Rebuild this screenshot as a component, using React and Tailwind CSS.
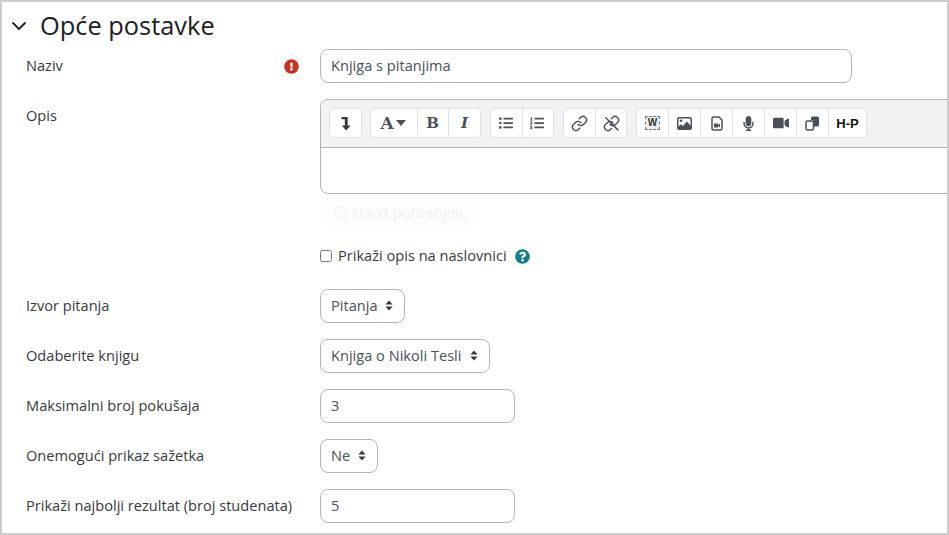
import React from "react";
import {
  FaExclamationCircle,
  FaListOl,
  FaListUl,
  FaMicrophone,
  FaQuestionCircle,
  FaVideo,
} from "react-icons/fa";
import { ChevronDown, Info, Link } from "lucide-react";

function ToolButton({ children, className = "w-[31px]" }) {
  return (
    <div
      className={`flex h-full items-center justify-center border-l border-[#dee2e6] first:border-l-0 text-[#495057] ${className}`}
    >
      {children}
    </div>
  );
}

function ToolGroup({ children, className = "" }) {
  return (
    <div className={`flex h-[30px] rounded-[4px] border border-[#dee2e6] bg-white ${className}`}>
      {children}
    </div>
  );
}

function Row({ label, alert, children }) {
  return (
    <div className="flex">
      <div className="flex h-[34px] w-[294px] shrink-0 items-center justify-between pr-[21px]">
        <span>{label}</span>
        {alert && <FaExclamationCircle className="text-[15px] text-[#ca3120]" />}
      </div>
      {children}
    </div>
  );
}

function TextField({ value, width }) {
  return (
    <input
      readOnly
      value={value}
      className={`h-[34px] rounded-[8px] border border-[#b1b5bb] bg-white px-[10px] pb-[3px] text-[#495057] outline-none ${width}`}
    />
  );
}

function SelectField({ value, width }) {
  return (
    <div
      className={`flex h-[34px] items-center justify-between rounded-[8px] border border-[#b1b5bb] bg-white px-[10px] pb-[1px] pr-[11px] text-[#495057] ${width}`}
    >
      <span>{value}</span>
      <svg width="8" height="11" viewBox="0 0 8 11" fill="#343a40">
        <path d="M4 0.5 7.6 4.4H0.4Z" />
        <path d="M4 10.5 0.4 6.6H7.6Z" />
      </svg>
    </div>
  );
}

function App() {
  return (
    <div className="h-[535px] w-[949px] overflow-hidden border-2 border-[#cccccc] bg-white font-['Open_Sans',sans-serif] text-[14.6px] text-[#373a3c]">
      <div className="flex h-[47px] items-center pl-[5px]">
        <ChevronDown size={24} strokeWidth={1.8} className="text-[#1d2125]" />
        <h3 className="ml-[9px] text-[25.4px] text-[#1d2125]">Opće postavke</h3>
      </div>

      <div className="flex flex-col pl-[24px]">
        <Row label="Naziv" alert>
          <TextField value="Knjiga s pitanjima" width="w-[532px]" />
        </Row>

        <div className="mt-[16px]">
          <Row label="Opis">
            <div className="flex-1">
              <div className="h-[95px] w-[640px] rounded-[8px] border border-[#b1b5bb]">
                <div className="flex h-[48px] gap-[9px] rounded-t-[8px] border-b border-[#b1b5bb] bg-[#f2f2f2] pl-[8px] pt-[8px]">
                  <ToolGroup className="-mr-px">
                    <ToolButton>
                      <svg width="10" height="15" viewBox="0 0 10 15" fill="#343a40">
                        <path d="M0.5 1h6.2v8.5H9.6L5.2 14.5 0.8 9.5h3V3.2H0.5Z" />
                      </svg>
                    </ToolButton>
                  </ToolGroup>
                  <ToolGroup>
                    <ToolButton className="w-[46px] gap-[2px] pr-[2px]">
                      <span className="font-['DejaVu_Serif',serif] text-[17px] font-bold leading-none">A</span>
                      <svg width="10" height="6" viewBox="0 0 10 6" fill="#495057">
                        <path d="M0 0h10L5 6Z" />
                      </svg>
                    </ToolButton>
                    <ToolButton className="w-[31px] pr-[1px]">
                      <span className="font-['DejaVu_Serif',serif] text-[15px] font-bold leading-none">B</span>
                    </ToolButton>
                    <ToolButton className="w-[32px]">
                      <span className="font-['DejaVu_Serif',serif] text-[15px] font-bold italic leading-none">I</span>
                    </ToolButton>
                  </ToolGroup>
                  <ToolGroup>
                    <ToolButton className="w-[31px] pr-[2px]">
                      <FaListUl className="text-[14px]" />
                    </ToolButton>
                    <ToolButton className="w-[31px] pr-[2px]">
                      <FaListOl className="text-[14px]" />
                    </ToolButton>
                  </ToolGroup>
                  <ToolGroup>
                    <ToolButton>
                      <Link size={17} strokeWidth={2} />
                    </ToolButton>
                    <ToolButton>
                      <svg width="17" height="17" viewBox="0 0 24 24" fill="none" stroke="currentColor" strokeWidth="2" strokeLinecap="round" strokeLinejoin="round">
                        <path d="M10 13a5 5 0 0 0 7.54.54l3-3a5 5 0 0 0-7.07-7.07l-1.72 1.71" />
                        <path d="M14 11a5 5 0 0 0-7.54-.54l-3 3a5 5 0 0 0 7.07 7.07l1.71-1.71" />
                        <path d="M4 4l17 17" />
                      </svg>
                    </ToolButton>
                  </ToolGroup>
                  <ToolGroup>
                    <ToolButton className="w-[31px]">
                      <div className="flex h-[14px] w-[15px] items-center justify-center border border-dashed border-[#777] bg-[#eeeeee] font-['Liberation_Sans',sans-serif] text-[10px] font-bold leading-none text-[#333]">
                        W
                      </div>
                    </ToolButton>
                    <ToolButton className="w-[32px]">
                      <svg width="15" height="13" viewBox="0 0 15 13" fill="none">
                        <rect x="0.75" y="0.75" width="13.5" height="11.5" rx="1.5" stroke="#495057" strokeWidth="1.5" />
                        <circle cx="4" cy="3.8" r="1.3" fill="#495057" />
                        <path d="M1 12V10L4 7.2 6 9 9.8 4.6 14 9V12Z" fill="#495057" />
                      </svg>
                    </ToolButton>
                    <ToolButton className="w-[32px]">
                      <svg width="12" height="15" viewBox="0 0 12 15" fill="none">
                        <path d="M1 2.5A1.5 1.5 0 0 1 2.5 1H8l3 3v8.5a1.5 1.5 0 0 1-1.5 1.5h-7A1.5 1.5 0 0 1 1 12.5Z" stroke="#495057" strokeWidth="1.5" />
                        <path d="M3 7.5h4v4H3ZM7 9l2-1.5v4L7 10Z" fill="#495057" />
                      </svg>
                    </ToolButton>
                    <ToolButton className="w-[32px]">
                      <FaMicrophone className="text-[15px]" />
                    </ToolButton>
                    <ToolButton className="w-[32px]">
                      <FaVideo className="text-[16px]" />
                    </ToolButton>
                    <ToolButton className="w-[32px]">
                      <svg width="15" height="15" viewBox="0 0 15 15" fill="none">
                        <path d="M6 2A1.5 1.5 0 0 1 7.5 0.5h5A1.5 1.5 0 0 1 14 2v7a1.5 1.5 0 0 1-1.5 1.5H9V5.5A1.5 1.5 0 0 0 7.5 4H6Z" fill="#495057" />
                        <rect x="1" y="5" width="7.5" height="9" rx="1.5" stroke="#495057" strokeWidth="1.5" />
                      </svg>
                    </ToolButton>
                    <ToolButton className="w-[38px]">
                      <span className="font-['Liberation_Sans',sans-serif] text-[13px] font-bold leading-none tracking-[0px] text-[#111]">
                        H-P
                      </span>
                    </ToolButton>
                  </ToolGroup>
                </div>
              </div>

              <div className="mt-[7px] flex h-[24px] w-[156px] items-center gap-[4px] rounded-[4px] bg-[#fdfdfd] pl-[14px] text-[#f1eeee]">
                <Info size={14} />
                <span>Nacrt pohranjen.</span>
              </div>

              <div className="mt-[20px] flex h-[22px] items-center">
                <input type="checkbox" readOnly className="h-[12px] w-[12px]" />
                <span className="ml-[6px]">Prikaži opis na naslovnici</span>
                <FaQuestionCircle className="ml-[8px] text-[15px] text-[#0f7f8f]" />
              </div>
            </div>
          </Row>
        </div>

        <div className="mt-[22px] flex flex-col gap-[16px]">
          <Row label="Izvor pitanja">
            <SelectField value="Pitanja" width="w-[85px]" />
          </Row>
          <Row label="Odaberite knjigu">
            <SelectField value="Knjiga o Nikoli Tesli" width="w-[170px]" />
          </Row>
          <Row label="Maksimalni broj pokušaja">
            <TextField value="3" width="w-[195px]" />
          </Row>
          <Row label="Onemogući prikaz sažetka">
            <SelectField value="Ne" width="w-[58px]" />
          </Row>
          <Row label="Prikaži najbolji rezultat (broj studenata)">
            <TextField value="5" width="w-[195px]" />
          </Row>
        </div>
      </div>
    </div>
  );
}

export default App;
